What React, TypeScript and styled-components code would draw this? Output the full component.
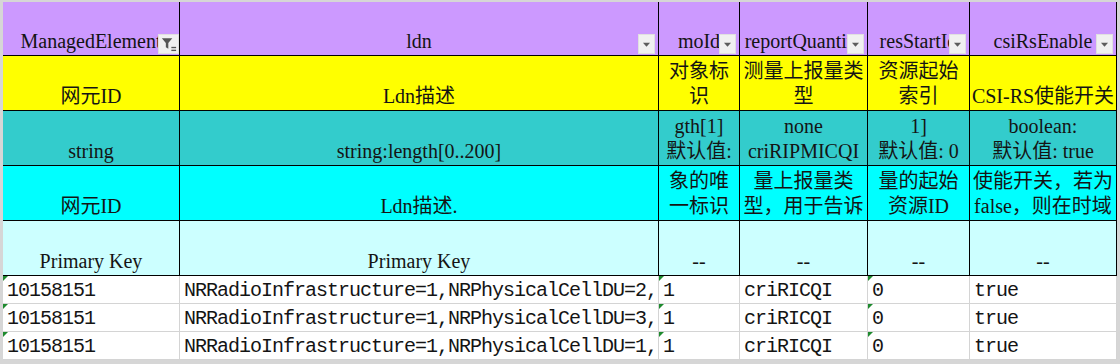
import React from "react";
import styled, { createGlobalStyle, css } from "styled-components";

type Fill = "head" | "name" | "type" | "desc" | "key";

const fills: Record<Fill, string> = {
    head: "#cc99ff",
    name: "#ffff00",
    type: "#33cccc",
    desc: "#00ffff",
    key: "#ccffff",
};

const headers: { label: string; funnel?: boolean }[] = [
    { label: "ManagedElement", funnel: true },
    { label: "ldn" },
    { label: "moId" },
    { label: "reportQuantity" },
    { label: "resStartId" },
    { label: "csiRsEnable" },
];

const infoRows: { fill: Fill; cells: string[][] }[] = [
    {
        fill: "name",
        cells: [["网元ID"], ["Ldn描述"], ["对象标", "识"], ["测量上报量类", "型"], ["资源起始", "索引"], ["CSI-RS使能开关"]],
    },
    {
        fill: "type",
        cells: [
            ["string"],
            ["string:length[0..200]"],
            ["gth[1]", "默认值:"],
            ["none", "criRIPMICQI"],
            ["1]", "默认值: 0"],
            ["boolean:", "默认值: true"],
        ],
    },
    {
        fill: "desc",
        cells: [
            ["网元ID"],
            ["Ldn描述."],
            ["象的唯", "一标识"],
            ["量上报量类", "型，用于告诉"],
            ["量的起始", "资源ID"],
            ["使能开关，若为", "false，则在时域"],
        ],
    },
    {
        fill: "key",
        cells: [["Primary Key"], ["Primary Key"], ["--"], ["--"], ["--"], ["--"]],
    },
];

const dataRows = [
    ["10158151", "NRRadioInfrastructure=1,NRPhysicalCellDU=2,", "1", "criRICQI", "0", "true"],
    ["10158151", "NRRadioInfrastructure=1,NRPhysicalCellDU=3,", "1", "criRICQI", "0", "true"],
    ["10158151", "NRRadioInfrastructure=1,NRPhysicalCellDU=1,", "1", "criRICQI", "0", "true"],
];

// columns that carry Excel's "number stored as text" marker
const flagged = [true, false, true, false, true, false];

function App() {
    return (
        <Frame>
            <GlobalStyle />
            <Sheet>
                {headers.map((h) => (
                    <HeadCell key={h.label} $fill="head">
                        <Line>{h.label}</Line>
                        <FilterButton $wide={h.funnel}>
                            {h.funnel ? (
                                <svg width="20" height="20" viewBox="0 0 20 20">
                                    <path d="M3 4h11l-4.2 5v6l-2.6-1.6V9z" fill="#555" />
                                    <rect x="13" y="13" width="5" height="1.4" fill="#555" />
                                    <rect x="13" y="16" width="5" height="1.4" fill="#555" />
                                </svg>
                            ) : (
                                <svg width="17" height="20" viewBox="0 0 17 20">
                                    <path d="M4.5 8.5h8l-4 4.5z" fill="#5c5c5c" />
                                </svg>
                            )}
                        </FilterButton>
                    </HeadCell>
                ))}
                {infoRows.map((row) =>
                    row.cells.map((lines, i) => (
                        <HeadCell key={row.fill + i} $fill={row.fill}>
                            {lines.map((l) => (
                                <Line key={l}>{l}</Line>
                            ))}
                        </HeadCell>
                    ))
                )}
                {dataRows.map((row, r) =>
                    row.map((v, i) => (
                        <DataCell key={r + "-" + i} $flag={flagged[i]}>
                            {v}
                        </DataCell>
                    ))
                )}
            </Sheet>
        </Frame>
    );
}

const GlobalStyle = createGlobalStyle`
    html, body {
        margin: 0;
        padding: 0;
        background: #d6d6d6;
    }
`;

const Frame = styled.div`
    box-sizing: border-box;
    width: 1120px;
    height: 364px;
    padding: 2px 3px 4px 3px;
    background: #d6d6d6;
    overflow: hidden;
`;

const Sheet = styled.div`
    display: grid;
    grid-template-columns: 177px 479px 81px 128px 102px 147px;
    grid-template-rows: 54px repeat(4, 55px) repeat(3, 28px);
    background: #ffffff;
`;

const HeadCell = styled.div<{ $fill: Fill }>`
    position: relative;
    box-sizing: border-box;
    display: flex;
    flex-direction: column;
    justify-content: flex-end;
    align-items: center;
    overflow: hidden;
    background: ${(p) => fills[p.$fill]};
    border-right: 1px solid #000;
    border-bottom: 1px solid #000;
    padding-bottom: 1px;
    font-family: "Liberation Serif", "Noto Sans CJK SC", serif;
    font-size: 20px;
    line-height: 25px;
    color: #141414;
    white-space: nowrap;
    text-align: center;
`;

const Line = styled.span`
    display: block;
`;

const FilterButton = styled.div<{ $wide?: boolean }>`
    position: absolute;
    right: ${(p) => (p.$wide ? "0" : "3px")};
    bottom: 1px;
    width: ${(p) => (p.$wide ? "21px" : "17px")};
    height: 20px;
    display: flex;
    align-items: center;
    justify-content: center;
    background: #f0f0f0;
    border: 1px solid #e0e0e0;
    box-sizing: border-box;
    overflow: hidden;
`;

const DataCell = styled.div<{ $flag?: boolean }>`
    position: relative;
    box-sizing: border-box;
    display: flex;
    align-items: flex-end;
    padding: 0 0 1px 4px;
    border-right: 1px solid #d4d4d4;
    border-bottom: 1px solid #d4d4d4;
    font-family: "Liberation Mono", "Noto Sans CJK SC", monospace;
    font-size: 20px;
    letter-spacing: -1px;
    line-height: 22px;
    color: #141414;
    white-space: nowrap;
    overflow: hidden;
    ${(p) =>
        p.$flag &&
        css`
            &::before {
                content: "";
                position: absolute;
                top: 0;
                left: 0;
                border-top: 5px solid #1e8a2e;
                border-right: 5px solid transparent;
            }
        `}
`;

export default App;
